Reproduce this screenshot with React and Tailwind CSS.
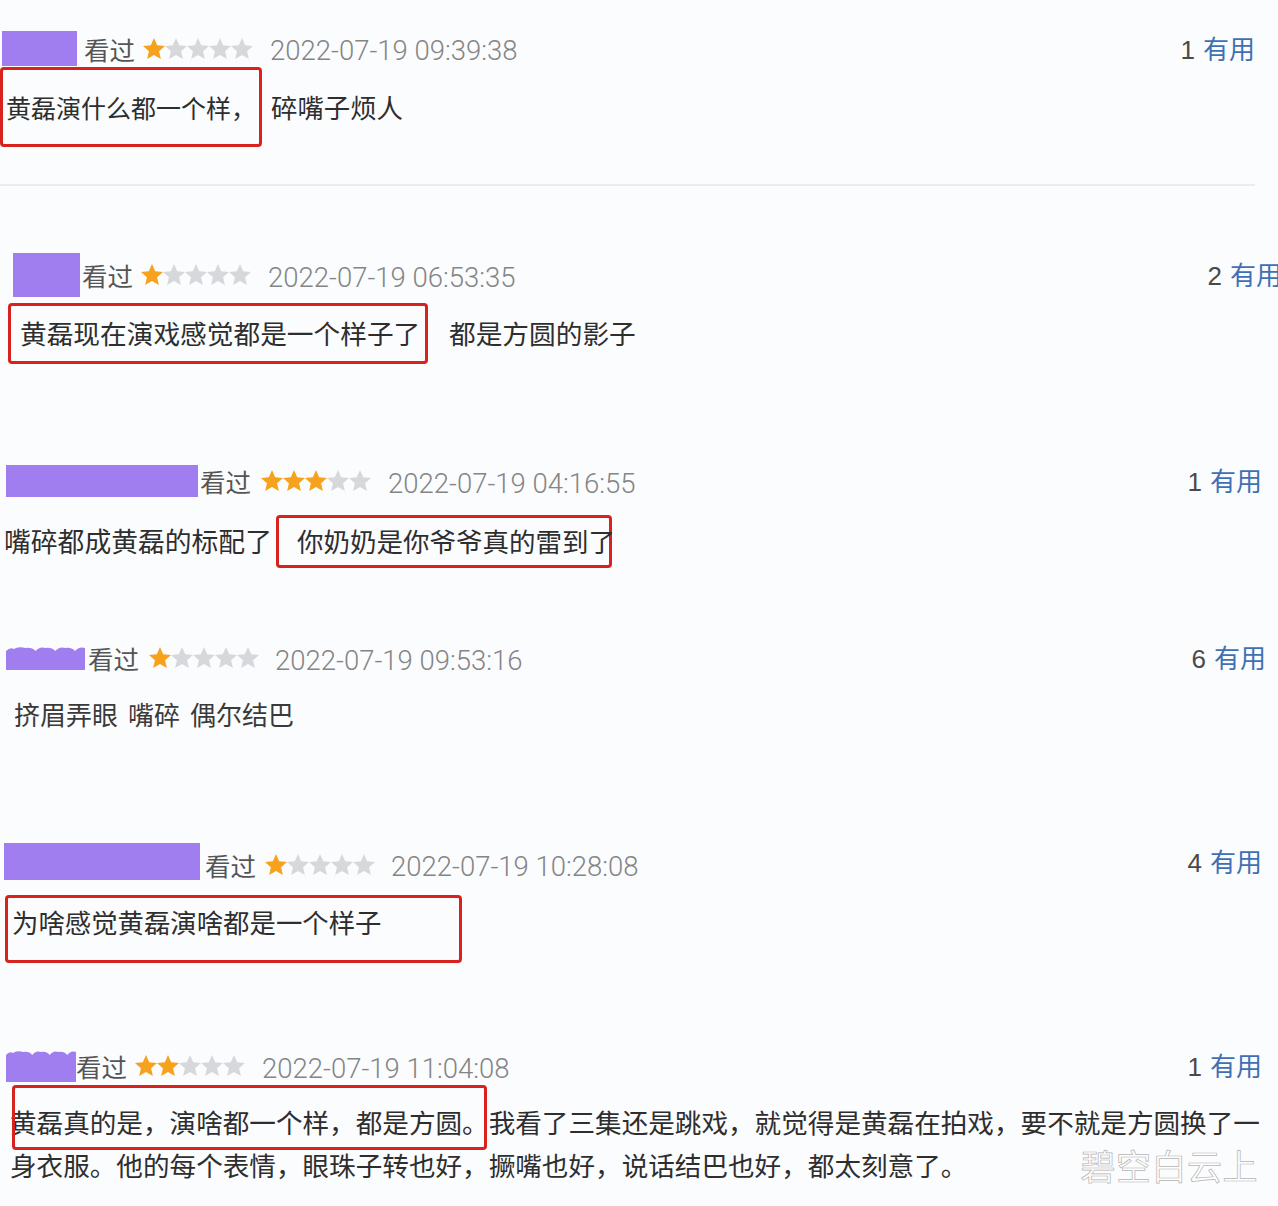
import React from "react";

const STAR = "M12 1.6l3.05 6.9 7.45.7-5.65 4.95 1.7 7.35L12 17.65 5.45 21.5l1.7-7.35L1.5 9.2l7.45-.7z";

function Stars({ filled }) {
  return (
    <div className="flex items-center">
      {[0, 1, 2, 3, 4].map((i) => (
        <svg key={i} width="22" height="22" viewBox="1.5 1.5 21 21">
          <path d={STAR} fill={i < filled ? "#f6a21c" : "#d6d8dc"} />
        </svg>
      ))}
    </div>
  );
}

function Block({ cls, wavy }) {
  if (wavy) {
    return (
      <div className={`${cls} shrink-0 flex flex-col`}>
        <svg className="w-full h-[5px]" viewBox="0 0 80 5" preserveAspectRatio="none">
          <path d="M0 5 Q4 1 8 3 Q12 0 20 2 Q26 1 30 5 Q34 0 40 2 Q46 1 50 5 Q54 0 60 2 Q66 1 70 5 Q74 0 80 2 L80 5 Z" fill="#a17ef0" />
        </svg>
        <div className="flex-1 bg-[#a17ef0]" />
      </div>
    );
  }
  return <div className={`${cls} shrink-0 bg-[#a17ef0]`} />;
}

function Header({ wrap, block, wavy, seen, stars, date, filled, time, n }) {
  return (
    <div className={`flex items-center ${wrap}`}>
      <Block cls={block} wavy={wavy} />
      <span className={`${seen} text-[25.5px] leading-none text-[#555]`}>看过</span>
      <div className={stars}>
        <Stars filled={filled} />
      </div>
      <span className={`${date} pt-[5px] font-['Roboto','Liberation_Sans',sans-serif] font-light text-[27.5px] leading-none text-[#858585]`}>
        {time}
      </span>
      <span className="ml-auto whitespace-nowrap leading-none text-[26px]">
        <span className="font-['Liberation_Sans',sans-serif] text-[#4a4a4a]">{n}</span>
        <span className="ml-[8px] text-[#3f70b4]">有用</span>
      </span>
    </div>
  );
}

const redBox = "border-[3px] border-[#d9211e] rounded-[4px] shrink-0";

export default function App() {
  return (
    <div className="w-[1278px] h-[1206px] overflow-hidden bg-[#fbfcfe] text-[#2e2e2e] font-['Noto_Sans_CJK_SC',sans-serif]">
      {/* 1 */}
      <Header
        wrap="mt-[31px] pl-[2px] pr-[23px] h-[35px]"
        block="w-[75px] h-[35px]"
        seen="ml-[7px]"
        stars="ml-[8px]"
        date="ml-[17px]"
        filled={1}
        time="2022-07-19 09:39:38"
        n="1"
      />
      <div className="mt-[1px] flex items-center">
        <div className={`${redBox} w-[262px] h-[80px] flex items-center pl-[3px]`}>
          <span className="text-[25px] leading-none whitespace-nowrap">黄磊演什么都一个样，</span>
        </div>
        <span className="ml-[9px] text-[26.4px] leading-none">碎嘴子烦人</span>
      </div>
      <div className="mt-[37px] h-[2px] w-[1255px] bg-[#ececf0]" />

      {/* 2 */}
      <Header
        wrap="mt-[67px] pl-[13px] -mr-[4px] h-[44px]"
        block="w-[67px] h-[44px]"
        seen="ml-[2px]"
        stars="ml-[8px]"
        date="ml-[17px]"
        filled={1}
        time="2022-07-19 06:53:35"
        n="2"
      />
      <div className="mt-[6px] flex items-center pl-[8px]">
        <div className={`${redBox} w-[420px] h-[61px] flex items-center pl-[9px]`}>
          <span className="text-[26.7px] leading-none whitespace-nowrap">黄磊现在演戏感觉都是一个样子了</span>
        </div>
        <span className="ml-[21px] text-[26.7px] leading-none">都是方圆的影子</span>
      </div>

      {/* 3 */}
      <Header
        wrap="mt-[101px] pl-[6px] pr-[16px] h-[32px]"
        block="w-[192px] h-[32px]"
        seen="ml-[2px]"
        stars="ml-[10px]"
        date="ml-[17px]"
        filled={3}
        time="2022-07-19 04:16:55"
        n="1"
      />
      <div className="mt-[18px] flex items-center pl-[4px]">
        <span className="text-[26.8px] leading-none whitespace-nowrap">嘴碎都成黄磊的标配了</span>
        <div className={`${redBox} ml-[4px] w-[336px] h-[53px] flex items-center pl-[18px]`}>
          <span className="text-[26.5px] leading-none whitespace-nowrap">你奶奶是你爷爷真的雷到了</span>
        </div>
      </div>

      {/* 4 */}
      <Header
        wrap="mt-[78px] pl-[6px] pr-[12px] h-[24px]"
        block="w-[79px] h-[24px]"
        wavy
        seen="ml-[3px]"
        stars="ml-[10px]"
        date="ml-[16px]"
        filled={1}
        time="2022-07-19 09:53:16"
        n="6"
      />
      <div className="mt-[29px] pl-[14px] h-[30px] flex items-center text-[26px] leading-none text-[#3a3a3a]">
        <span>挤眉弄眼</span>
        <span className="ml-[10px]">嘴碎</span>
        <span className="ml-[10px]">偶尔结巴</span>
      </div>

      {/* 5 */}
      <Header
        wrap="mt-[114px] pl-[4px] pr-[16px] h-[37px]"
        block="w-[196px] h-[37px]"
        seen="ml-[5px] pt-[6px]"
        stars="ml-[9px] pt-[6px]"
        date="ml-[16px] mt-[5px]"
        filled={1}
        time="2022-07-19 10:28:08"
        n="4"
      />
      <div className="mt-[15px] pl-[5px]">
        <div className={`${redBox} w-[457px] h-[68px] pl-[4px] pt-[11px]`}>
          <span className="text-[26.4px] leading-none whitespace-nowrap">为啥感觉黄磊演啥都是一个样子</span>
        </div>
      </div>

      {/* 6 */}
      <Header
        wrap="mt-[87px] pl-[6px] pr-[16px] h-[32px]"
        block="w-[70px] h-[32px]"
        wavy
        seen="ml-0"
        stars="ml-[8px]"
        date="ml-[17px]"
        filled={2}
        time="2022-07-19 11:04:08"
        n="1"
      />
      <div className="relative mt-[3px] pl-[10px] pt-[15px] text-[26.6px] leading-[43px] whitespace-nowrap">
        <div>黄磊真的是，演啥都一个样，都是方圆。我看了三集还是跳戏，就觉得是黄磊在拍戏，要不就是方圆换了一</div>
        <div className="flex items-center pr-[20px]">
          <span>身衣服。他的每个表情，眼珠子转也好，撅嘴也好，说话结巴也好，都太刻意了。</span>
          <span className="ml-auto text-[35px] leading-none text-white [-webkit-text-stroke:0.7px_#b4b4b4] tracking-[0.5px]">
            碧空白云上
          </span>
        </div>
        <div className={`${redBox} absolute top-0 left-[12px] w-[475px] h-[65px]`} />
      </div>
    </div>
  );
}
